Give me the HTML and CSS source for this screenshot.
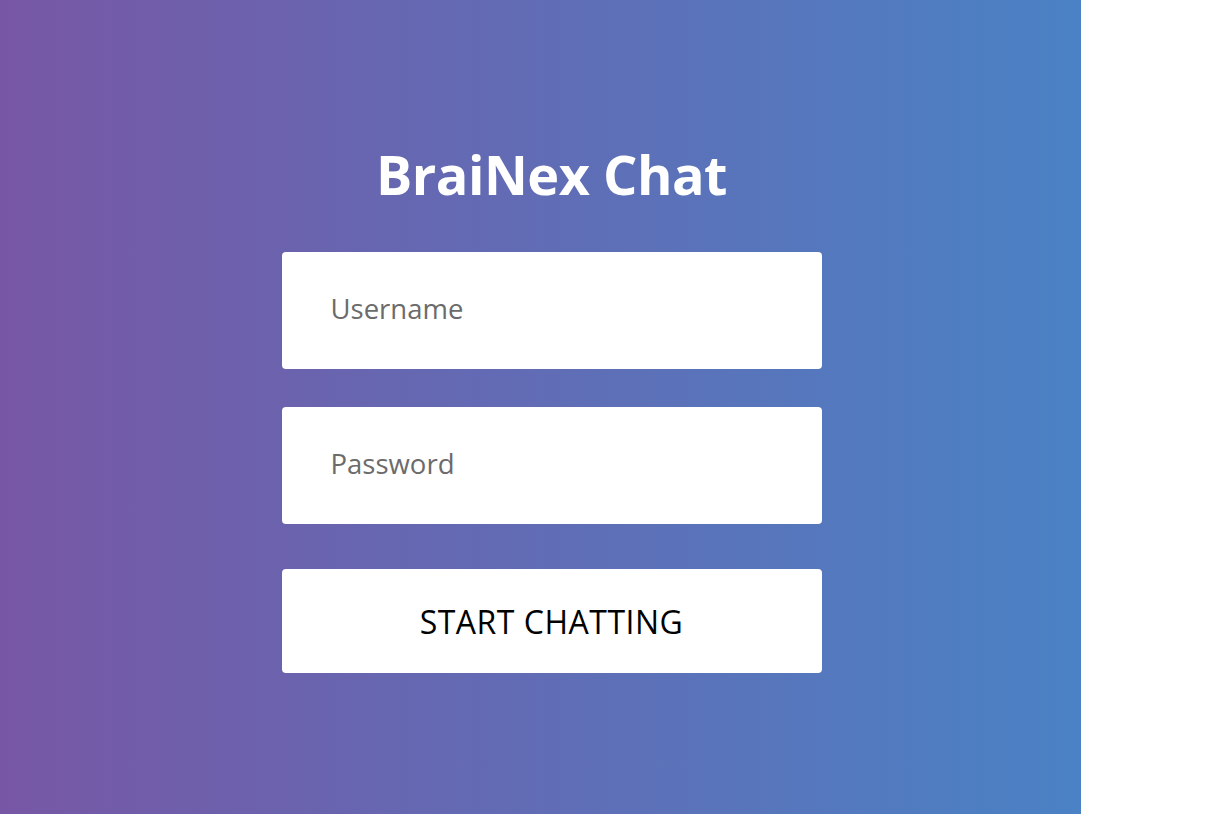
FILE: index.html
```html
<!DOCTYPE html>
<html lang="en">
<head>
<meta charset="utf-8">
<title>BraiNex Chat</title>
<link rel="stylesheet" href="styles.css">
</head>
<body>
<main class="panel">
  <form class="login">
    <h1 class="title">BraiNex Chat</h1>
    <input class="field" type="text" placeholder="Username">
    <input class="field" type="password" placeholder="Password">
    <button class="start" type="button">START CHATTING</button>
  </form>
</main>
</body>
</html>
```
FILE: styles.css
```css
html, body {
  margin: 0;
  padding: 0;
  height: 100%;
  background: #ffffff;
}
body {
  font-family: "Open Sans", "Noto Sans", sans-serif;
}
.panel {
  width: 1081px;
  height: 814px;
  box-sizing: border-box;
  background: linear-gradient(to right, #7757a5, #4a82c5);
  display: flex;
  justify-content: center;
  padding-left: 22px;
  padding-top: 134px;
}
.login {
  width: 540px;
  display: flex;
  flex-direction: column;
}
.title {
  margin: 0 0 38px 0;
  text-align: center;
  color: #ffffff;
  font-weight: 700;
  font-size: 54px;
  line-height: 80px;
  letter-spacing: -0.5px;
}
.field {
  height: 117px;
  box-sizing: border-box;
  border: none;
  border-radius: 4px;
  background: #ffffff;
  padding: 0 0 4px 49px;
  margin: 0 0 38px 0;
  font-family: inherit;
  font-size: 27.5px;
  color: #333;
  outline: none;
}
.field::placeholder {
  color: #6b6b6b;
}
.start {
  margin-top: 7px;
  height: 104px;
  border: none;
  border-radius: 4px;
  background: #ffffff;
  color: #000000;
  font-family: inherit;
  font-size: 32px;
  letter-spacing: 0.5px;
  padding-top: 2px;
  cursor: pointer;
}
```
